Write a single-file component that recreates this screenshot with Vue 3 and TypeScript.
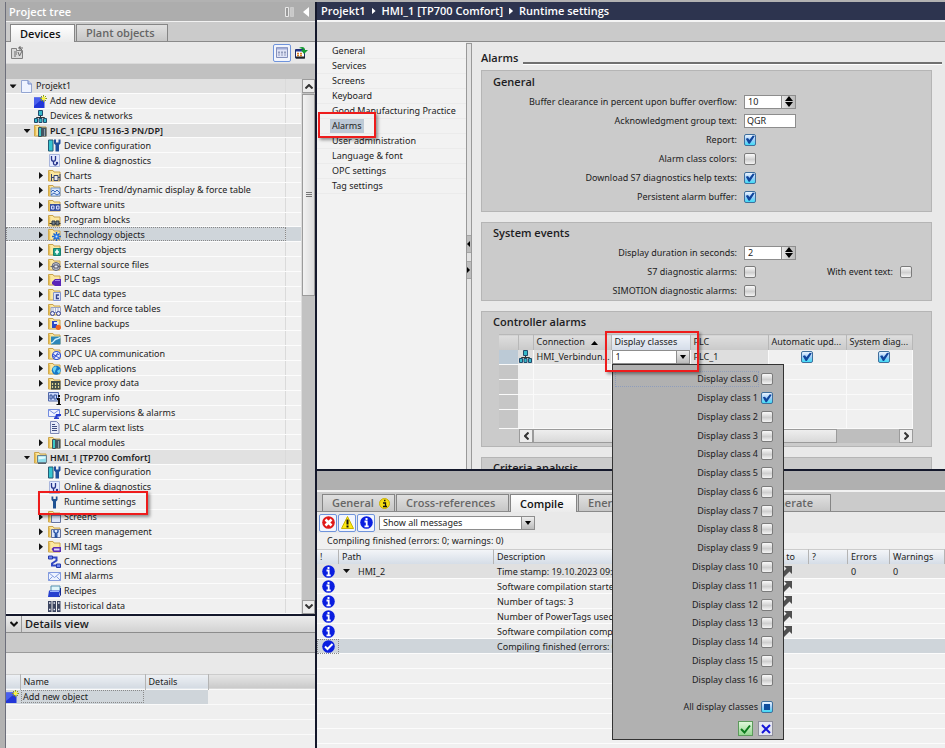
<script setup lang="ts">
import { ref } from 'vue'

interface TreeNode {
  label: string
  depth: number
  icon: string
  state?: 'open' | 'closed'
  bold?: boolean
  selected?: boolean
}

const folder =
  '<path d="M.5 1.500h4.500l1 1.500h6v9H.5z" fill="#fbe7a0" stroke="#c9a24a"/><path d="M1.500 2.500v9" stroke="#e8bf55" stroke-width="1.500"/>'
const wrench =
  '<path d="M6 .5v4l1.500 1.500v6.500h3.500V6l1.500-1.500v-4h-2v3h-2.500v-3z" fill="#1f4f9c"/>'
const server = '<path d="M.5 1h4.500v11H.5z" fill="#35c4cf" stroke="#245b74"/>'

const icons: Record<string, string> = {
  project:
    '<path d="M1.500.5h6.500l3.500 3.500v8.500h-10z" fill="#eef3ff" stroke="#93a5d2"/><path d="M8 .5v3.500h3.500" fill="#b9c8ee" stroke="#7388c4"/>',
  add: '<path d="M0 2.500h10.500V13H0z" fill="#2236d8"/><path d="M0 2.500h10L0 11z" fill="#4a60ec"/><path d="M9.500 0v7M6 3.500h7M7 1l5 5M12 1L7 6" stroke="#8a9a10"/><circle cx="9.500" cy="3.500" r="1.900" fill="#f6f34a"/>',
  network:
    '<path d="M6.500 5v3M2.500 10V7.500h8V10" fill="none" stroke="#333"/><path d="M4.500.5h4v5h-4zM.5 8.500h3v4h-3zM5 8.500h3v4H5zM9.500 8.500h3v4h-3z" fill="#35b8c8" stroke="#204b6e"/>',
  plc: folder + '<path d="M4.500 3.500h3v9h-3z" fill="#3ac8c8" stroke="#40505c"/><path d="M7.500 3.500h5v9h-5z" fill="#455563"/><path d="M10.500 5v7" stroke="#90a0aa"/>',
  config: server + wrench,
  diag: '<path d="M1.500.5h10v12h-10z" fill="#e4eaff" stroke="#a9b6dd"/><path d="M3.500 2v3c0 3 4 3 4 0V2M5.500 7v2.500c0 2 3.500 2 3.500 0" fill="none" stroke="#27348c" stroke-width="1.300"/><circle cx="9" cy="9" r="1.200" fill="#27348c"/>',
  charts: folder + '<path d="M3.500 5v7M12 5v7M3.500 8.500h2.500M10 8.500h2" stroke="#37456d"/><path d="M6 6.500h4v5H6z" fill="#e8e8ee" stroke="#37456d"/>',
  trend: folder + '<path d="M3 4h9v8H3z" fill="#d5e5fa" stroke="#7296cc"/><path d="M3 8l2-2 2 2 2-2 3 3M3 11l3-2 3 2 3-2" fill="none" stroke="#3666b8"/>',
  units: folder + '<path d="M2 5h10.500v7H2z" fill="#3850a0"/><path d="M3.500 7h2.500v3H3.500zM8.500 7H11v3H8.500z" fill="#4659a6" stroke="#d4ddff"/>',
  blocks: folder + '<path d="M1.500 9.500h11" stroke="#333"/><path d="M4 7h3v4H4zM8 7h3v4H8z" fill="#73818c" stroke="#303942"/>',
  tech: folder + '<path d="M8.500 4v9M4 8.500h9M5.500 5.500l6 6M11.500 5.500l-6 6" stroke="#1d62cc" stroke-width="1.500"/><circle cx="8.500" cy="8.500" r="2.500" fill="#2c7be0"/><circle cx="8.500" cy="8.500" r="1" fill="#d4e8ff"/>',
  energy: folder + '<path d="M5.500 5.500h7v7h-7z" fill="#22a38c" stroke="#16806d"/><path d="M9 6.500v5M7 9h4" stroke="#fff" stroke-width="1.500"/>',
  source: folder + '<circle cx="8" cy="8.500" r="4" fill="#c6c9d6" stroke="#62677a"/><path d="M2.500 8.500h11" stroke="#62677a"/><path d="M6 7h4v3H6z" fill="#eceef5" stroke="#4c5163"/>',
  tags: folder + '<path d="M4 9l3-3h6v7H7L4 11z" fill="#5b25b8"/><path d="M7 7.500h5" stroke="#a583e8"/>',
  types: folder + '<path d="M5.500 4.500h7v8h-7z" fill="#dce3fb" stroke="#8495cc"/><path d="M11 7H8.500v3.500H11" fill="none" stroke="#36458f" stroke-width="1.400"/>',
  watch: folder + '<path d="M3 4.500h9.500v5H3z" fill="#eff1fa" stroke="#9aa3c4"/><path d="M5 5v4M7.500 5v4M10 5v4" stroke="#aab3cc"/><circle cx="4.500" cy="10.500" r="2" fill="#e5e9fc" stroke="#363f90"/><circle cx="10.500" cy="10.500" r="2" fill="#e5e9fc" stroke="#363f90"/>',
  backup: folder + '<path d="M4 4h5v7H4z" fill="#2d48c8"/><path d="M6 5h4v5H6z" fill="#dfe5ff"/><path d="M6 7h3v4H6z" fill="#2d48c8"/><circle cx="10.300" cy="10.300" r="2.600" fill="#f06422"/>',
  traces: folder + '<path d="M3 4.500h9.500v8H3z" fill="#2c86b8"/><path d="M3 11c3 0 3-4 5.500-4S11 5.500 12.500 5.500" fill="none" stroke="#d5f2ff" stroke-width="1.300"/>',
  opc: folder + '<circle cx="8.500" cy="8.500" r="4" fill="#e8edff" stroke="#3653d2" stroke-width="1.200"/><path d="M5 7l6 4M6 11.500l4-6M5 9.500L11.500 7" stroke="#3653d2"/>',
  web: folder + '<circle cx="8.300" cy="8.300" r="4.500" fill="#1878c8"/><path d="M5 6c2-2 4-2 3.500 0S7 8 7 10 4 8 5 6zM9 9l3-2c1 2 0 4-1.500 4.500z" fill="#69d3f3"/>',
  proxy: folder + '<path d="M3 4h9.500v8.500H3z" fill="#424d49"/><path d="M4.500 6v5M7.500 6v5M10.500 6v5" stroke="#d7cf8e" stroke-width="1.200" stroke-dasharray="2 1"/>',
  info: '<path d="M.5.5h10v8.500H.5z" fill="#c9d7fb" stroke="#5168a8"/><path d="M2 3h2v4H2zM6 3h2.500v4H6zM4 5h2" fill="none" stroke="#2f4d93"/><path d="M9 6h3v6h1v1H8.500v-1H10V8H9z" fill="#111"/><path d="M10 3h2v2h-2z" fill="#111"/>',
  superv: '<path d="M.5 2.500h11v7H.5z" fill="#eef2ff" stroke="#738ce0"/><path d="M.5 2.500l5.500 4 5.500-4" fill="none" stroke="#738ce0"/><path d="M8 7h5v2H9.500v1.500H11V12H6v-1.500h1z" fill="#253bd0"/>',
  lists: '<path d="M2.500.5h6l2.500 2.500v9.500H2.500z" fill="#e7ebf9" stroke="#7c87b4"/><path d="M4 3.500h3M4 5.500h5M4 7.500h5M4 9.500h5" stroke="#3e4c80"/>',
  hmi: folder + '<path d="M3.500 4.500h9v7h-9z" fill="#8edbe9" stroke="#697f8d"/><path d="M4 12.500h8" stroke="#59636a"/><path d="M4.500 5.500h7v2l-7 1z" fill="#dffaff"/>',
  wrench: '<path d="M3.500.5v3.500l1.500 1.500v7h3V5.500L9.500 4V.5H7.800v2.500H5.300V.5z" fill="#205292"/>',
  screens: folder + '<path d="M3.500 4.500h9v8h-9z" fill="#dde6fb" stroke="#64739f"/><path d="M4 5.500h8" stroke="#8497cb"/>',
  manage: folder + '<path d="M3.500 4.500h9v8h-9z" fill="#dbe5fc" stroke="#647099"/><path d="M6 5v2l1.300 1v4h1.500V8L10 7V5" fill="none" stroke="#1e4b9e" stroke-width="1.300"/>',
  hmitags: folder + '<path d="M3.500 9l2-2H13v5H5.500z" fill="#5a2db4"/><path d="M6 8.500h5.500v2H6z" fill="#ded3fa"/>',
  conn: '<path d="M4 2.500h4.500v3L4 8.500v2h6" fill="none" stroke="#3147c4" stroke-width="2"/><path d="M.5 1h4v3h-4zM8.500 9h4v3.500h-4z" fill="#6f86f2" stroke="#263aa9"/>',
  mail: '<path d="M.5 2.500h12v8H.5z" fill="#edf3ff" stroke="#839bde"/><path d="M.5 2.500l6 5 6-5M.5 10.500l4-4M12.500 10.500l-4-4" fill="none" stroke="#839bde"/>',
  recipes: '<path d="M3 1h9v6H3z" fill="#dff6fa" stroke="#5590ae"/><path d="M1 5.500h11l-1 6.500H0z" fill="#2640cf"/><path d="M2 6.500h9" stroke="#9db6ff"/><path d="M12.500 3v7L11 12" stroke="#142890" fill="none"/>',
  history: '<path d="M0 1h3.500v11H0zM4.500 1H8v11H4.500zM9 1h3.500v11H9z" fill="#3c4560"/><path d="M1 3h1.500M5.500 3H7M10 3h1.500M1 9.500h1.500M5.500 9.500H7M10 9.500h1.500" stroke="#e7eaf6" stroke-width="1.500"/>',
}

const tree: TreeNode[] = [
  { label: 'Projekt1', depth: 0, icon: 'project', state: 'open' },
  { label: 'Add new device', depth: 1, icon: 'add' },
  { label: 'Devices & networks', depth: 1, icon: 'network' },
  { label: 'PLC_1 [CPU 1516-3 PN/DP]', depth: 1, icon: 'plc', state: 'open', bold: true },
  { label: 'Device configuration', depth: 2, icon: 'config' },
  { label: 'Online & diagnostics', depth: 2, icon: 'diag' },
  { label: 'Charts', depth: 2, icon: 'charts', state: 'closed' },
  { label: 'Charts - Trend/dynamic display & force table', depth: 2, icon: 'trend', state: 'closed' },
  { label: 'Software units', depth: 2, icon: 'units', state: 'closed' },
  { label: 'Program blocks', depth: 2, icon: 'blocks', state: 'closed' },
  { label: 'Technology objects', depth: 2, icon: 'tech', state: 'closed', selected: true },
  { label: 'Energy objects', depth: 2, icon: 'energy', state: 'closed' },
  { label: 'External source files', depth: 2, icon: 'source', state: 'closed' },
  { label: 'PLC tags', depth: 2, icon: 'tags', state: 'closed' },
  { label: 'PLC data types', depth: 2, icon: 'types', state: 'closed' },
  { label: 'Watch and force tables', depth: 2, icon: 'watch', state: 'closed' },
  { label: 'Online backups', depth: 2, icon: 'backup', state: 'closed' },
  { label: 'Traces', depth: 2, icon: 'traces', state: 'closed' },
  { label: 'OPC UA communication', depth: 2, icon: 'opc', state: 'closed' },
  { label: 'Web applications', depth: 2, icon: 'web', state: 'closed' },
  { label: 'Device proxy data', depth: 2, icon: 'proxy', state: 'closed' },
  { label: 'Program info', depth: 2, icon: 'info' },
  { label: 'PLC supervisions & alarms', depth: 2, icon: 'superv' },
  { label: 'PLC alarm text lists', depth: 2, icon: 'lists' },
  { label: 'Local modules', depth: 2, icon: 'plc', state: 'closed' },
  { label: 'HMI_1 [TP700 Comfort]', depth: 1, icon: 'hmi', state: 'open', bold: true },
  { label: 'Device configuration', depth: 2, icon: 'config' },
  { label: 'Online & diagnostics', depth: 2, icon: 'diag' },
  { label: 'Runtime settings', depth: 2, icon: 'wrench' },
  { label: 'Screens', depth: 2, icon: 'screens', state: 'closed' },
  { label: 'Screen management', depth: 2, icon: 'manage', state: 'closed' },
  { label: 'HMI tags', depth: 2, icon: 'hmitags', state: 'closed' },
  { label: 'Connections', depth: 2, icon: 'conn' },
  { label: 'HMI alarms', depth: 2, icon: 'mail' },
  { label: 'Recipes', depth: 2, icon: 'recipes' },
  { label: 'Historical data', depth: 2, icon: 'history' },
]

const settingsPages = [
  'General', 'Services', 'Screens', 'Keyboard', 'Good Manufacturing Practice',
  'Alarms', 'User administration', 'Language & font', 'OPC settings', 'Tag settings',
]
const activePage = ref('Alarms')

const bufferClearance = ref('10')
const groupText = ref('QGR')
const duration = ref('2')
const generalFlags = ref([
  { id: 'report', label: 'Report:', on: true },
  { id: 'colors', label: 'Alarm class colors:', on: false },
  { id: 'help', label: 'Download S7 diagnostics help texts:', on: true },
  { id: 'persist', label: 'Persistent alarm buffer:', on: true },
])
const s7Alarms = ref(false)
const eventText = ref(false)
const simotion = ref(false)
const autoUpdate = ref(true)
const systemDiag = ref(true)

const popupOpen = ref(true)
const displayClasses = ref(Array.from({ length: 17 }, (_, n) => ({ n, on: n === 1 })))

const filter = ref('Show all messages')
const messages = [
  { path: 'HMI_2', text: 'Time stamp: 19.10.2023 09:12:45', go: true, errors: '0', warnings: '0' },
  { text: 'Software compilation started.', go: true },
  { text: 'Number of tags: 3', go: true },
  { text: 'Number of PowerTags used: 0', go: true },
  { text: 'Software compilation completed.', go: true },
  { text: 'Compiling finished (errors: 0; warnings: 0)', done: true },
]

function step(value: string, by: number): string {
  return String(Math.max(0, Number(value) + by))
}
</script>

<template>
  <div class="app">
    <aside class="left">
      <header class="pane-title">
        <h2>Project tree</h2>
        <button class="bare" aria-label="Dock pane">
          <svg width="9" height="10"><path d="M.5.5h3v9h-3z" fill="#999" stroke="#e8e8e8" /><path d="M5.500.5h3v9h-3z" fill="#c8c8c8" stroke="#ccc" /></svg>
        </button>
        <button class="bare" aria-label="Collapse pane">
          <svg width="6" height="10"><path d="M6 0v10L0 5z" fill="#fff" /></svg>
        </button>
      </header>

      <div class="tabs tree-tabs">
        <button class="tab active">Devices</button>
        <button class="tab">Plant objects</button>
      </div>

      <div class="tree-tools">
        <button class="bare" aria-label="New item">
          <svg width="13" height="13"><path d="M.5 2.500h5v2h6v8H.5z" fill="#d9d9d9" stroke="#808080" /><path d="M3 6h3M3 8h3M3 10h2M7 6l1.500 4L11 5M9 0v4M7 2h5M8 1l3 3" fill="none" stroke="#6d6d6d" /></svg>
        </button>
        <span class="spacer"></span>
        <button class="framed" aria-label="Table view">
          <svg width="12" height="12"><path d="M.5.5h11v10H.5z" fill="#dfe3f6" stroke="#8490bc" /><path d="M1 1.500h10" stroke="#a0acd8" stroke-width="2" /><path d="M3 4.500v4M6 4.500v4M9 4.500v4" stroke="#7b86ab" stroke-dasharray="2 1" stroke-width="1.500" /></svg>
        </button>
        <button class="bare" aria-label="Open in editor">
          <svg width="13" height="13"><path d="M.5 3.500h9v8.500h-9z" fill="#fff" stroke="#1d2b66" /><path d="M1 4.500h8" stroke="#26378c" stroke-width="2" /><path d="M2 7.500h6M2 9.500h6" stroke="#d77a20" stroke-width="1.500" stroke-dasharray="2 1" /><path d="M1 11.500h9" stroke="#222" stroke-width="2" /><path d="M4 2c3-2 6-1 6 2h3L9 8 6 4h2C8 3 6 2 4 2z" fill="#159a32" /></svg>
        </button>
      </div>
      <div class="tree-gap"></div>

      <div class="tree-area">
        <ul class="tree">
          <li
            v-for="(node, i) in tree"
            :key="i"
            :class="{ group: node.state === 'open', selected: node.selected, bold: node.bold }"
          >
            <span class="node" :class="'d' + node.depth">
              <span class="twisty" :class="node.state"></span>
              <svg width="13" height="13" viewBox="0 0 13 13" v-html="icons[node.icon]"></svg>
              <span>{{ node.label }}</span>
            </span>
          </li>
        </ul>
        <div class="vscroll">
          <button class="sbtn" aria-label="Scroll up"><svg width="8" height="5"><path d="M.5 4.500L4 1l3.500 3.500" /></svg></button>
          <div class="vtrack"><div class="vthumb"><i></i></div></div>
          <button class="sbtn" aria-label="Scroll down"><svg width="8" height="5"><path d="M.5.5L4 4 7.500.5" /></svg></button>
        </div>
      </div>

      <section class="details">
        <header>
          <button class="bare fold" aria-label="Collapse details"><svg width="8" height="6"><path d="M.5 1L4 4.500 7.500 1" fill="none" stroke="#111" stroke-width="2" /></svg></button>
          <h2>Details view</h2>
        </header>
        <div class="d-gap"></div>
        <div class="d-tools"></div>
        <table>
          <colgroup><col class="c14" /><col class="c125" /><col class="c63" /><col /></colgroup>
          <thead><tr><th></th><th>Name</th><th>Details</th><th></th></tr></thead>
          <tbody>
            <tr>
              <td><svg width="13" height="13" viewBox="0 0 13 13" v-html="icons.add"></svg></td>
              <td>Add new object</td><td></td><td></td>
            </tr>
          </tbody>
        </table>
        <div class="d-rest"></div>
      </section>
    </aside>

    <main class="right">
      <nav class="crumbs">
        <a href="#">Projekt1</a><i></i><a href="#">HMI_1 [TP700 Comfort]</a><i></i><a href="#">Runtime settings</a>
      </nav>
      <div class="r-gap"></div>

      <div class="editor">
        <ul class="pages">
          <li v-for="p in settingsPages" :key="p">
            <a href="#" :class="{ current: p === activePage }" @click.prevent="activePage = p">{{ p }}</a>
          </li>
        </ul>
        <div class="splitter">
          <button aria-label="Shrink list"><svg width="3" height="6"><path d="M3 0v6L0 3z" /></svg></button>
          <button aria-label="Grow list"><svg width="3" height="6"><path d="M0 0v6l3-3z" /></svg></button>
        </div>

        <div class="content">
          <div class="title"><h1>Alarms</h1><hr /></div>

          <section class="card general">
            <h3>General</h3>
            <div class="field">
              <label for="clearance">Buffer clearance in percent upon buffer overflow:</label>
              <span class="spin">
                <input id="clearance" v-model="bufferClearance" type="text" />
                <span>
                  <button aria-label="Increase" @click="bufferClearance = step(bufferClearance, 1)"><svg width="8" height="5"><path d="M4 0l4 5H0z" /></svg></button>
                  <button aria-label="Decrease" @click="bufferClearance = step(bufferClearance, -1)"><svg width="8" height="5"><path d="M0 0h8L4 5z" /></svg></button>
                </span>
              </span>
            </div>
            <div class="field">
              <label for="group">Acknowledgment group text:</label>
              <input id="group" v-model="groupText" class="text" type="text" />
            </div>
            <div v-for="f in generalFlags" :key="f.id" class="field">
              <label :for="f.id">{{ f.label }}</label>
              <input :id="f.id" v-model="f.on" type="checkbox" />
            </div>
          </section>

          <section class="card system">
            <h3>System events</h3>
            <div class="field">
              <label for="duration">Display duration in seconds:</label>
              <span class="spin">
                <input id="duration" v-model="duration" type="text" />
                <span>
                  <button aria-label="Increase" @click="duration = step(duration, 1)"><svg width="8" height="5"><path d="M4 0l4 5H0z" /></svg></button>
                  <button aria-label="Decrease" @click="duration = step(duration, -1)"><svg width="8" height="5"><path d="M0 0h8L4 5z" /></svg></button>
                </span>
              </span>
            </div>
            <div class="field">
              <label for="s7">S7 diagnostic alarms:</label>
              <input id="s7" v-model="s7Alarms" type="checkbox" />
              <span class="aside">
                <label for="event">With event text:</label>
                <input id="event" v-model="eventText" type="checkbox" />
              </span>
            </div>
            <div class="field">
              <label for="simotion">SIMOTION diagnostic alarms:</label>
              <input id="simotion" v-model="simotion" type="checkbox" />
            </div>
          </section>

          <section class="card controller">
            <h3>Controller alarms</h3>
            <table>
              <colgroup><col class="c19" /><col class="c15" /><col class="c78" /><col class="c79" /><col class="c78" /><col class="c78" /><col /></colgroup>
              <thead>
                <tr>
                  <th></th><th></th>
                  <th>Connection <svg class="sort" width="7" height="4"><path d="M3.500 0L7 4H0z" /></svg></th>
                  <th class="hot">Display classes</th><th>PLC</th><th>Automatic upd...</th><th>System diag...</th>
                </tr>
              </thead>
              <tbody>
                <tr class="filled">
                  <td class="mark"></td>
                  <td><svg width="13" height="13" viewBox="0 0 13 13" v-html="icons.network"></svg></td>
                  <td>HMI_Verbindun...</td>
                  <td class="combo-cell">
                    <button class="combo" role="combobox" aria-label="Display classes" :aria-expanded="popupOpen" @click="popupOpen = !popupOpen">
                      <span>1</span><i><svg width="6" height="4"><path d="M0 0h6L3 4z" /></svg></i>
                    </button>
                  </td>
                  <td>PLC_1</td>
                  <td class="mid light"><input v-model="autoUpdate" type="checkbox" aria-label="Automatic update" /></td>
                  <td class="mid light"><input v-model="systemDiag" type="checkbox" aria-label="System diagnostics" /></td>
                </tr>
                <tr v-for="n in 4" :key="n"><td></td><td></td><td></td><td></td><td></td><td></td><td></td></tr>
              </tbody>
            </table>
            <div class="hscroll">
              <button class="sbtn" aria-label="Scroll left"><svg width="5" height="8"><path d="M4.500.5L1 4l3.500 3.500" /></svg></button>
              <div class="htrack"><div class="hthumb"></div></div>
              <button class="sbtn" aria-label="Scroll right"><svg width="5" height="8"><path d="M.5.5L4 4 .5 7.500" /></svg></button>
            </div>
          </section>

          <section class="card criteria"><h3>Criteria analysis</h3></section>
        </div>
      </div>

      <section class="output">
        <div class="o-gap"></div>
        <div class="tabs out-tabs">
          <button class="tab t-general">General
            <svg width="11" height="11"><circle cx="5.500" cy="5.500" r="5" fill="#f5dd16" stroke="#c9b000" /><path d="M4 5h2.500v3.500h1M4 8.500h4M5 2.500h1.500" fill="none" stroke="#111" stroke-width="1.300" /></svg>
          </button>
          <button class="tab t-cross">Cross-references</button>
          <button class="tab t-compile active">Compile</button>
          <button class="tab t-energy">Energy suite</button>
          <button class="tab t-generate">Generate</button>
        </div>
        <div class="filters">
          <button class="framed" aria-label="Show errors"><svg width="13" height="13"><circle cx="6.500" cy="6.500" r="6.300" fill="#e01818" /><path d="M3.500 3.500l6 6M9.500 3.500l-6 6" stroke="#fff" stroke-width="2.500" /></svg></button>
          <button class="framed" aria-label="Show warnings"><svg width="13" height="13"><path d="M6.500.5l6 12H.5z" fill="#ffe912" stroke="#c9b400" /><path d="M6.500 3.500v5M6.500 9.500v2" stroke="#111" stroke-width="2" /></svg></button>
          <button class="framed" aria-label="Show information"><svg width="13" height="13"><circle cx="6.500" cy="6.500" r="6.300" fill="#0a1ee0" /><path d="M4.500 5.500h2.200v4.500M4.500 10.300h4.200M5.500 3h2" fill="none" stroke="#fff" stroke-width="1.800" /></svg></button>
          <span class="select">
            <select v-model="filter" aria-label="Message filter"><option>Show all messages</option></select>
            <i><svg width="6" height="4"><path d="M0 0h6L3 4z" /></svg></i>
          </span>
        </div>
        <p class="status">Compiling finished (errors: 0; warnings: 0)</p>
        <table>
          <colgroup><col class="c22" /><col class="c155" /><col /><col class="c40" /><col class="c39" /><col class="c42" /><col class="c55" /></colgroup>
          <thead><tr><th>!</th><th>Path</th><th>Description</th><th>Go to</th><th>?</th><th>Errors</th><th>Warnings</th></tr></thead>
          <tbody>
            <tr v-for="(m, i) in messages" :key="i" :class="{ group: m.path, selected: m.done }">
              <td>
                <svg width="13" height="13">
                  <circle cx="6.500" cy="6.500" r="6.300" fill="#0a1ee0" />
                  <path v-if="m.done" d="M3 6.500l2.500 2.500 5-5" fill="none" stroke="#fff" stroke-width="2" />
                  <path v-else d="M4.500 5.500h2.200v4.500M4.500 10.300h4.200M5.500 3h2" fill="none" stroke="#fff" stroke-width="1.800" />
                </svg>
              </td>
              <td><span v-if="m.path" class="path"><span class="twisty open"></span>{{ m.path }}</span></td>
              <td>{{ m.text }}</td>
              <td class="go"><svg v-if="m.go" width="12" height="12"><path d="M3 1h8v8L8.500 6.500 3 12 0 9l5.500-5.500z" fill="#505050" /></svg></td>
              <td></td><td>{{ m.errors }}</td><td>{{ m.warnings }}</td>
            </tr>
          </tbody>
        </table>
        <div class="o-rest"></div>
      </section>
    </main>

    <div v-if="popupOpen" class="popup">
      <div class="classes">
        <label v-for="c in displayClasses" :key="c.n" :class="{ focus: c.n === 0 }">
          <span>Display class {{ c.n }}</span><input v-model="c.on" type="checkbox" />
        </label>
      </div>
      <label class="all"><span>All display classes</span><input type="checkbox" class="partial" /></label>
      <div class="actions">
        <button class="ok" aria-label="Apply" @click="popupOpen = false"><svg width="11" height="10"><path d="M1 5l3.500 3.500L10 1.500" fill="none" stroke="#0c7a1c" stroke-width="2" /></svg></button>
        <button aria-label="Cancel" @click="popupOpen = false"><svg width="10" height="10"><path d="M1 1l8 8M9 1L1 9" stroke="#1414d8" stroke-width="2" /></svg></button>
      </div>
    </div>

    <div class="callout page-call"></div>
    <div class="callout tree-call"></div>
    <div class="callout class-call"></div>
  </div>
</template>

<style>
body { margin: 0; background: #b2b2b2; }
</style>

<style scoped>
* { box-sizing: border-box; }
.app {
  --line: #8a8a8a;
  --dark: #14182b;
  --head: 600 11px/14px "Open Sans", "Noto Sans", sans-serif;
  position: relative;
  display: grid;
  grid-template-columns: 310px 1fr;
  height: 100vh;
  padding: 2px 0 0 5px;
  overflow: hidden;
  background: #b2b2b2;
  color: #1c1c22;
  font: 9px/14px "Noto Sans", "Open Sans", sans-serif;
}
h1, h2, h3, p, ul { margin: 0; padding: 0; }
h1, h2, h3 { font: var(--head); }
ul { list-style: none; }
button, input, select { font: inherit; color: inherit; margin: 0; padding: 0; }
button { border: 0; background: none; cursor: pointer; }
svg { display: block; flex: none; }
a { color: inherit; text-decoration: none; }
table { border-collapse: collapse; table-layout: fixed; width: 100%; }
th, td { padding: 0 0 0 3px; font-weight: 400; text-align: left; white-space: nowrap; overflow: hidden; }
.bare, .framed { display: flex; align-items: center; justify-content: center; }
.framed { width: 18px; height: 18px; border: 1px solid #6f94dc; border-radius: 2px; background: #f2f5fd; }
.spacer { flex: 1; }

input[type="checkbox"] {
  appearance: none;
  display: block;
  flex: none;
  width: 12px;
  height: 12px;
  border: 1px solid #7b7b7b;
  border-radius: 2px;
  background: linear-gradient(#fafafa, #cfcfcf 55%, #f4f4f4);
}
input[type="checkbox"]:checked, input.partial { border-color: #3f6f9c; background: linear-gradient(#eaf4ff, #9fcdf8 50%, #40dcf6); }
input[type="checkbox"]:checked::after {
  content: "";
  display: block;
  width: 10px;
  height: 10px;
  background: #10459c;
  clip-path: polygon(8% 42%, 30% 36%, 44% 56%, 78% 10%, 98% 16%, 48% 92%, 36% 92%);
}
input.partial::after { content: ""; display: block; width: 6px; height: 6px; margin: 2px; background: #0d4c9c; }

/* left pane */
.left { display: flex; flex-direction: column; min-height: 0; border-left: 1px solid #6d6f7b; }
.pane-title { display: flex; align-items: center; gap: 9px; height: 19px; padding: 0 6px 0 3px; background: #adadad; color: #fff; }
.pane-title h2 { flex: 1; }
.tabs { display: flex; align-items: flex-end; gap: 1px; background: #cbcbcb; border-top: 1px solid #f2f2f2; border-bottom: 1px solid var(--line); }
.tab { position: relative; height: 17px; padding: 0 9px; border: 1px solid #858585; border-bottom: 0; background: linear-gradient(#e0e0e0, #c6c6c6); color: #666; font: var(--head); text-align: left; }
.tab.active { height: 18px; margin-bottom: -1px; background: linear-gradient(#fff, #ebebeb); color: #111; }
.tree-tabs { height: 21px; padding-left: 4px; }
.tree-tabs .tab { width: 92px; }
.tree-tabs .active { width: 65px; }
.tree-tools { display: flex; align-items: center; gap: 4px; height: 22px; padding: 0 7px 0 5px; background: #e9e9e9; border-bottom: 1px solid #dadada; }
.tree-gap { height: 15px; background: #c1c1c1; }
.tree-area { display: flex; flex: 1; min-height: 0; }
.tree { display: grid; grid-auto-rows: 1fr; flex: 1; border-right: 1px solid #ddd; background: #f0f0f0; }
.tree li { display: flex; min-height: 0; border-bottom: 1px solid #fcfcfc; }
.node { display: flex; align-items: center; width: 280px; padding-top: 1px; border-right: 1px solid #dadada; white-space: nowrap; }
.node svg { margin-right: 3px; }
.d1 { padding-left: 14px; }
.d2 { padding-left: 28px; }
.tree .group { background: #e1e1e1; }
.bold { font-weight: 600; }
.tree .selected { background: #cfd5da; }
.selected .node { outline: 1px dotted #888; outline-offset: -1px; }
.twisty { display: flex; justify-content: center; width: 14px; flex: none; }
.twisty.open::before { content: ""; width: 7px; height: 4px; background: #111; clip-path: polygon(0 0, 100% 0, 50% 100%); }
.twisty.closed::before { content: ""; width: 4px; height: 7px; background: #111; clip-path: polygon(0 0, 100% 50%, 0 100%); }
.vscroll { display: flex; flex-direction: column; width: 13px; background: #c2c2c2; }
.sbtn { display: flex; align-items: center; justify-content: center; flex: none; width: 14px; height: 14px; border: 1px solid #9b9b9b; background: #ececec; }
.sbtn path { fill: none; stroke: #333; stroke-width: 2; }
.vscroll .sbtn { width: 13px; }
.vtrack { flex: 1; padding-top: 1px; }
.vthumb { display: flex; align-items: center; justify-content: center; height: 40%; border: 1px solid #9b9b9b; background: linear-gradient(90deg, #f2f2f2, #dcdcdc); }
.vthumb i { width: 6px; height: 6px; background: repeating-linear-gradient(#777 0 1px, transparent 1px 2px); }

.details { flex: none; border-top: 2px solid var(--dark); background: #efefef; }
.details header { display: flex; align-items: center; height: 17px; background: linear-gradient(#ececec, #d2d2d2); border-bottom: 1px solid #8c8c8c; }
.fold { width: 16px; height: 100%; border-right: 1px solid #999; margin-right: 3px; }
.d-gap { height: 20px; background: #cacaca; border-bottom: 1px solid #9b9b9b; }
.d-tools { height: 21px; background: #e9e9e9; }
.details th { height: 15px; border-right: 1px solid #b4b4b4; border-top: 1px solid #ccc; background: linear-gradient(#eef1f5, #d3dae2); }
.details th:last-child { border-right: 0; background: linear-gradient(#e6e6e6, #c9c9c9); }
.details td { height: 15px; line-height: 13px; background: #cfd5da; border-top: 1px solid #fafafa; }
.details td:first-child { padding: 0; }
.details td:nth-child(2) { outline: 1px dotted #888; outline-offset: -2px; }
.details td:last-child { background: #efefef; }
.d-rest { height: 44px; background: repeating-linear-gradient(#fafafa 0 1px, #efefef 1px 15px); }
.c14 { width: 14px; } .c15 { width: 15px; } .c19 { width: 19px; } .c22 { width: 22px; } .c39 { width: 39px; }
.c40 { width: 40px; } .c42 { width: 42px; } .c55 { width: 55px; } .c63 { width: 63px; } .c78 { width: 78px; }
.c79 { width: 79px; } .c125 { width: 125px; } .c155 { width: 155px; }

/* right pane */
.right { display: flex; flex-direction: column; min-width: 0; min-height: 0; border-left: 2px solid var(--dark); }
.crumbs { display: flex; align-items: center; gap: 6px; height: 18px; padding-left: 4px; background: #2d344f; color: #fff; font: var(--head); }
.crumbs i { width: 4px; height: 7px; background: #fff; clip-path: polygon(0 0, 100% 50%, 0 100%); }
.r-gap { height: 22px; background: #cacaca; border-top: 2px solid #f4f4f4; border-bottom: 1px solid #8c8c8c; }
.editor { display: flex; flex: 1; min-height: 0; background: #e9e9e9; }
.pages { width: 149px; padding-top: 2px; background: #f2f2f2; }
.pages li { height: 15px; padding-left: 13px; border-bottom: 1px solid #ebebeb; }
.pages a { display: inline-block; padding: 0 2px; line-height: 14px; white-space: nowrap; }
.pages .current { background: #becad6; }
.splitter { display: flex; flex-direction: column; justify-content: center; gap: 8px; width: 6px; margin-top: 1px; border: 1px solid #999; border-bottom: 0; background: #e3e3e3; }
.splitter button { display: flex; align-items: center; height: 18px; background: #bdbdbd; border: 1px solid #a5a5a5; border-width: 1px 0; }
.content { flex: 1; min-width: 0; padding: 9px 13px 0 9px; overflow: hidden; }
.title { display: flex; align-items: center; gap: 5px; height: 14px; margin: 0 -10px 5px 0; }
.title hr { flex: 1; height: 3px; margin: 10px 0 0; border: 0; border-bottom: 1px solid #fff; background: #707070; }
.card { margin-bottom: 10px; padding: 3px 19px 0 11px; border: 1px solid #b5b5b5; background: #cbcbcb; }
.card h3 { margin-bottom: 5px; }
.general { padding-top: 4px; padding-bottom: 5px; }
.general h3, .system h3 { margin-bottom: 3px; }
.field { display: flex; align-items: center; gap: 7px; height: 19px; }
.field > label { width: 244px; text-align: right; white-space: nowrap; }
.aside { display: flex; align-items: center; gap: 7px; margin-left: auto; }
.text, .spin { width: 52px; height: 14px; border: 1px solid #8d8d8d; background: #fff; }
input.text { padding: 0 2px; }
.spin { display: flex; }
.spin input { flex: 1; min-width: 0; padding: 0 3px; border: 0; background: #fff; }
.spin > span { display: flex; flex-direction: column; width: 14px; border-left: 1px solid #8d8d8d; background: linear-gradient(90deg, #e6e6e6, #bbb); }
.spin button { display: flex; align-items: center; justify-content: center; flex: 1; min-height: 0; }

.controller { padding: 3px 18px 3px 11px; }
.controller table { width: calc(100% - 6px); margin-left: 6px; }
.controller th { height: 15px; border-right: 1px solid #b8b8b8; border-top: 1px solid #b8b8b8; background: linear-gradient(#dedede, #c9c9c9); }
.controller .hot { background: linear-gradient(#f0f4fa, #d4dce8); }
.sort { display: inline; margin-left: 4px; }
.controller td { height: 15px; line-height: 13px; border-right: 1px solid #fafafa; border-bottom: 1px solid #fafafa; background: #f0f0f0; }
.controller tr:last-child td { height: 19px; }
.controller td:first-child { background: #c6c6c6; border-right: 0; }
.controller .filled td { background: #dedede; }
.controller .filled .light { background: #f0f0f0; }
.controller .filled .mark { background: #bccad6; }
.controller td:nth-child(2) { padding: 0 1px; }
.controller td.combo-cell, .controller td.mid { padding: 0; }
.controller td.mid:last-child { padding-left: 10px; }
.mid input { margin: 0 auto; }
.combo, .select { display: flex; align-items: center; width: 100%; border: 1px solid #8d8d8d; background: #fff; }
.combo { height: 14px; }
.combo span { flex: 1; padding-left: 3px; text-align: left; }
.combo i, .select i { display: flex; align-items: center; justify-content: center; flex: none; width: 13px; height: 100%; border-left: 1px solid #8d8d8d; background: linear-gradient(#eee, #bbb); pointer-events: none; }
.hscroll { display: flex; margin-left: 26px; background: #bebebe; }
.htrack { flex: 1; }
.hthumb { width: 83%; height: 14px; border: 1px solid #9b9b9b; background: linear-gradient(#eee, #d9d9d9); }
.criteria { height: 40px; }

.output { flex: none; border-top: 2px solid var(--dark); background: #f0f0f0; }
.output table { border-collapse: separate; border-spacing: 0; }
.o-gap { height: 19px; background: #b0b0b0; }
.out-tabs { height: 22px; padding-left: 5px; border-top: 2px solid #f2f2f2; }
.t-general { display: flex; align-items: center; justify-content: space-between; width: 73px; padding-right: 4px; }
.t-cross { width: 113px; }
.t-compile { width: 67px; }
.t-energy { width: 90px; }
.t-generate { width: 162px; padding-right: 17px; text-align: right; }
.filters { display: flex; align-items: center; gap: 1px; height: 21px; padding-left: 2px; background: #e9e9e9; }
.select { width: 156px; height: 14px; margin-left: 3px; }
.select select { appearance: none; flex: 1; width: 0; height: 12px; padding-left: 3px; border: 0; background: #fff; line-height: 12px; }
.status { height: 16px; padding-left: 10px; line-height: 16px; }
.output th { height: 15px; border-right: 1px solid #b4b4b4; border-top: 1px solid #ccc; background: linear-gradient(#f3f5f8, #d5dde7); }
.output td { height: 15px; line-height: 13px; border-bottom: 1px solid #fcfcfc; background: #f0f0f0; }
.output td:first-child { padding-left: 5px; }
.output .group td { background: #e0e0e0; }
.output .selected td { background: #cfd5da; }
.output .selected td:first-child { outline: 1px dotted #888; outline-offset: -1px; }
.path { display: flex; align-items: center; height: 13px; }
.path .twisty { width: 9px; margin-right: 7px; }
.output td.go { padding-left: 12px; }
.o-rest { height: 94px; background: repeating-linear-gradient(#f0f0f0 0 14px, #fcfcfc 14px 15px); }

/* overlays */
.popup { position: absolute; left: 612px; top: 364px; width: 172px; height: 376px; padding: 5px 10px 0 3px; border: 1px solid #333; background: #b1b1b1; }
.classes { display: grid; grid-auto-rows: 1fr; height: 319px; }
.popup label { display: flex; align-items: center; justify-content: flex-end; gap: 3px; }
.focus span { flex: 1; text-align: right; outline: 1px dotted #8f9dbb; }
.all { height: 18px; margin-top: 9px; }
.actions { display: flex; justify-content: flex-end; gap: 5px; margin-top: 5px; }
.actions button { display: flex; align-items: center; justify-content: center; width: 15px; height: 15px; border: 1px solid #8f8f9c; background: #e4e6f2; }
.actions .ok { border-color: #5c9a5c; background: linear-gradient(#e0f8dc, #94d890); }
.callout { position: absolute; border: 2px solid #ee1c1c; box-shadow: 2px 2px 3px rgba(0, 0, 0, 0.4); pointer-events: none; }
.page-call { left: 318px; top: 112px; width: 58px; height: 26px; }
.tree-call { left: 38px; top: 491px; width: 110px; height: 24px; }
.class-call { left: 605px; top: 331px; width: 94px; height: 41px; }
</style>
